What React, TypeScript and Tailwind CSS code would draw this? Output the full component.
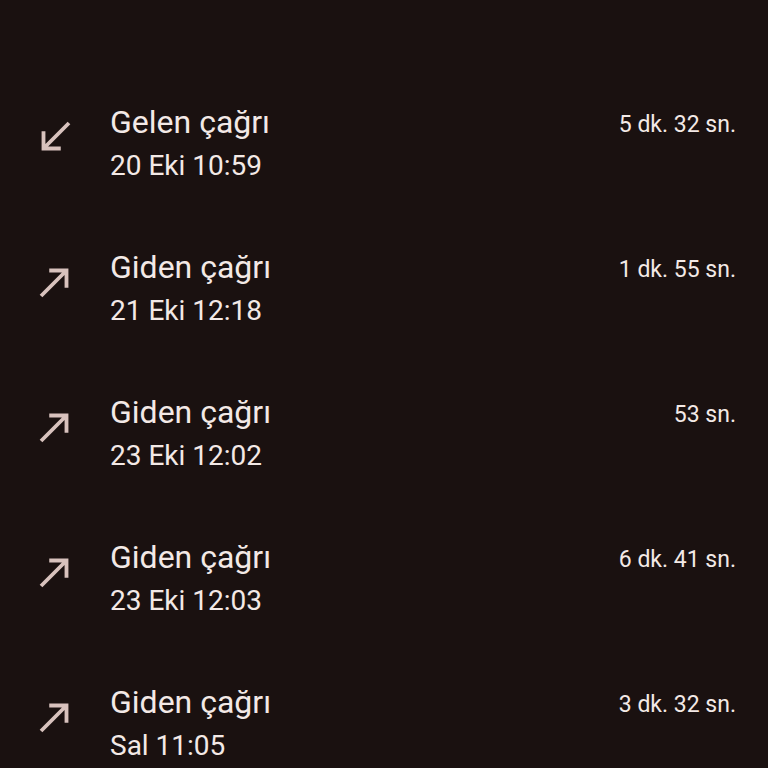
import React from 'react';

type CallKind = 'in' | 'out';

interface CallRow {
  kind: CallKind;
  label: string;
  when: string;
  duration: string;
}

const CALLS: CallRow[] = [
  { kind: 'in', label: 'Gelen çağrı', when: '20 Eki 10:59', duration: '5 dk. 32 sn.' },
  { kind: 'out', label: 'Giden çağrı', when: '21 Eki 12:18', duration: '1 dk. 55 sn.' },
  { kind: 'out', label: 'Giden çağrı', when: '23 Eki 12:02', duration: '53 sn.' },
  { kind: 'out', label: 'Giden çağrı', when: '23 Eki 12:03', duration: '6 dk. 41 sn.' },
  { kind: 'out', label: 'Giden çağrı', when: 'Sal 11:05', duration: '3 dk. 32 sn.' },
];

// material call_received / call_made
function CallIcon({ kind }: { kind: CallKind }) {
  const d =
    kind === 'in'
      ? 'M20 5.41L18.59 4 7 15.59V9H5v10h10v-2H8.41z'
      : 'M9 5v2h6.59L4 18.59 5.41 20 17 8.41V15h2V5z';
  return (
    <svg viewBox="0 0 24 24" className="w-[46px] h-[46px] shrink-0 mt-[12px] fill-[#d8c2bd]">
      <path d={d} />
    </svg>
  );
}

export default function App() {
  return (
    <div
      className="w-[768px] h-[768px] overflow-hidden bg-[#1a1110] text-[#f3e9e6] pt-[71px]"
      style={{ fontFamily: 'Roboto, "Noto Sans", sans-serif' }}
    >
      {CALLS.map((c, i) => (
        <div key={i} className="h-[145px] flex items-start pt-[31px] pl-[32px] pr-[32px]">
          <CallIcon kind={c.kind} />
          <div className="ml-[32px] flex-1 flex flex-col">
            <div className="flex items-start justify-between">
              <span className="text-[32px] leading-[40px]">{c.label}</span>
              <span className="text-[23px] leading-[40px] mt-[3px]">{c.duration}</span>
            </div>
            <span className="text-[28px] leading-[34px] mt-[4px]">{c.when}</span>
          </div>
        </div>
      ))}
    </div>
  );
}
